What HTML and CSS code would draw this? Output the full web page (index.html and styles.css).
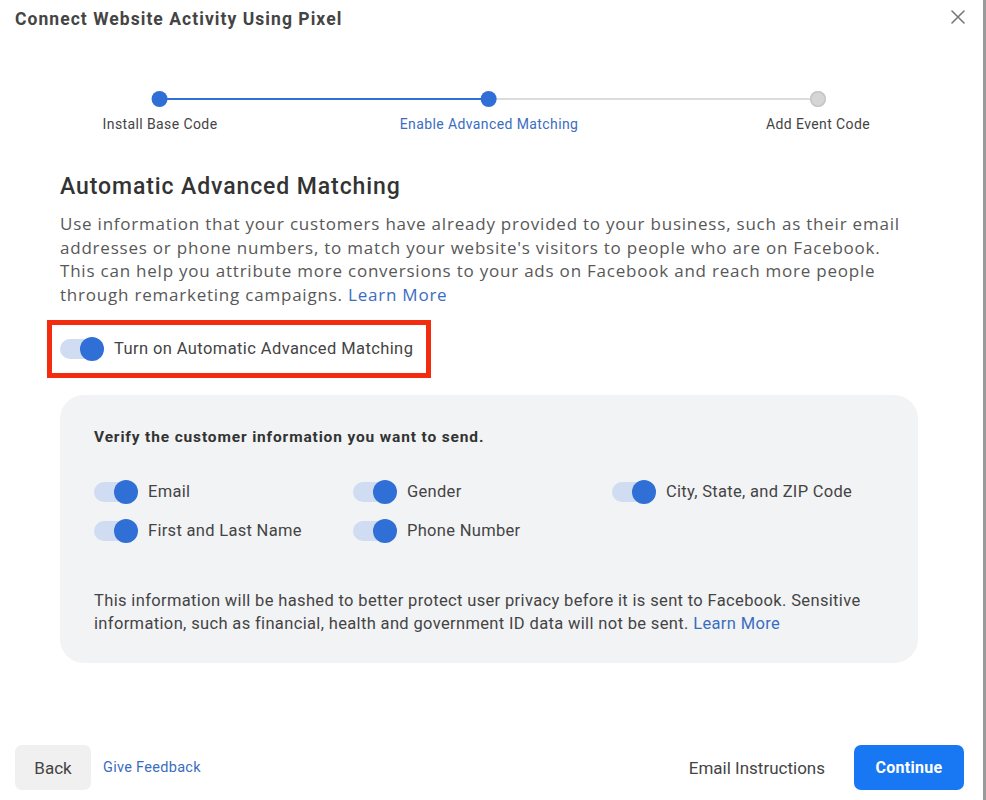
FILE: index.html
```html
<!DOCTYPE html>
<html>
<head>
<meta charset="utf-8">
<link rel="stylesheet" href="styles.css">
</head>
<body>
<div class="dialog">
  <header class="top">
    <h1 class="title">Connect Website Activity Using Pixel</h1>
    <span class="close" aria-label="Close">
      <svg width="14" height="14" viewBox="0 0 14 14"><path d="M1 1L13 13M13 1L1 13" stroke="#777" stroke-width="1.6" stroke-linecap="round"/></svg>
    </span>
  </header>

  <div class="stepper">
    <div class="track"><div class="track-done"></div></div>
    <div class="step done"><span class="dot"></span><span class="step-label">Install Base Code</span></div>
    <div class="step current"><span class="dot"></span><span class="step-label">Enable Advanced Matching</span></div>
    <div class="step todo"><span class="dot"></span><span class="step-label">Add Event Code</span></div>
  </div>

  <main class="content">
    <h2 class="heading">Automatic Advanced Matching</h2>
    <p class="intro">Use information that your customers have already provided to your business, such as their email<br>addresses or phone numbers, to match your website's visitors to people who are on Facebook.<br>This can help you attribute more conversions to your ads on Facebook and reach more people<br>through remarketing campaigns. <a class="link">Learn More</a></p>

    <div class="highlight">
      <span class="toggle"><span class="knob"></span></span>
      <span class="main-label">Turn on Automatic Advanced Matching</span>
    </div>

    <section class="panel">
      <div class="panel-title">Verify the customer information you want to send.</div>
      <div class="grid">
        <div class="opt"><span class="toggle"><span class="knob"></span></span><span>Email</span></div>
        <div class="opt"><span class="toggle"><span class="knob"></span></span><span>Gender</span></div>
        <div class="opt"><span class="toggle"><span class="knob"></span></span><span>City, State, and ZIP Code</span></div>
        <div class="opt"><span class="toggle"><span class="knob"></span></span><span>First and Last Name</span></div>
        <div class="opt"><span class="toggle"><span class="knob"></span></span><span>Phone Number</span></div>
      </div>
      <p class="note">This information will be hashed to better protect user privacy before it is sent to Facebook. Sensitive<br>information, such as financial, health and government ID data will not be sent. <a class="link">Learn More</a></p>
    </section>
  </main>

  <footer class="footer">
    <div class="left">
      <button class="btn back">Back</button>
      <a class="feedback">Give Feedback</a>
    </div>
    <div class="right">
      <a class="email">Email Instructions</a>
      <button class="btn continue">Continue</button>
    </div>
  </footer>
</div>
</body>
</html>
```
FILE: styles.css
```css
html, body {
  margin: 0;
  padding: 0;
  background: #fff;
}
body {
  font-family: Roboto, "Liberation Sans", Arial, sans-serif;
  color: #444;
}
.dialog {
  width: 983px;
  height: 800px;
  border-right: 3px solid #9a9a9a;
  display: flex;
  flex-direction: column;
  position: relative;
}
.top {
  display: flex;
  justify-content: space-between;
  align-items: flex-start;
  padding: 9px 18px 0 15px;
}
.title {
  margin: 0;
  font-size: 17.5px;
  letter-spacing: 1.05px;
  font-weight: 700;
  color: #444;
  line-height: 20px;
}
.close {
  display: block;
}
.stepper {
  position: relative;
  height: 60px;
  margin: 61px 0 0 0;
}
.track {
  position: absolute;
  left: 160px;
  top: 8px;
  width: 658px;
  height: 2px;
  background: #dcdcdc;
}
.track-done {
  width: 329px;
  height: 2px;
  background: #2f6fd6;
}
.step {
  position: absolute;
  top: 0;
  display: flex;
  flex-direction: column;
  align-items: center;
  transform: translateX(-50%);
}
.step.done { left: 160px; }
.step.current { left: 489px; }
.step.todo { left: 818px; }
.dot {
  width: 16px;
  height: 16px;
  border-radius: 50%;
  background: #2f6fd6;
  display: block;
  margin-top: 1px;
}
.todo .dot {
  background: #d5d5d5;
  box-shadow: inset 0 0 0 1.5px #c6c6c6;
}
.step-label {
  margin-top: 9px;
  font-size: 14px;
  letter-spacing: 0.4px;
  color: #444;
  white-space: nowrap;
}
.current .step-label { color: #3a6dbf; }

.content {
  padding: 0 65px 0 60px;
}
.heading {
  margin: 23px 0 0 0;
  font-size: 23px;
  letter-spacing: 0.9px;
  font-weight: 500;
  color: #333;
  line-height: 28px;
}
.intro {
  margin: 11px 0 0 0;
  font-family: "Open Sans", "Liberation Sans", sans-serif;
  font-size: 17px;
  letter-spacing: 0.78px;
  line-height: 23.7px;
  color: #585858;
  white-space: nowrap;
}
.link {
  color: #3a6dbf;
  text-decoration: none;
}
.highlight {
  display: inline-flex;
  align-items: center;
  gap: 10px;
  margin: 13px 0 0 -13px;
  padding: 12px 13px 12px 8px;
  border: 5px solid #f32b0f;
}
.main-label {
  font-size: 16.5px;
  letter-spacing: 0.4px;
  color: #444;
}
.toggle {
  position: relative;
  display: inline-block;
  width: 44px;
  height: 24px;
  flex: none;
}
.toggle::before {
  content: "";
  position: absolute;
  left: 0;
  top: 2px;
  width: 40px;
  height: 20px;
  border-radius: 10px;
  background: #cfdcf2;
}
.knob {
  position: absolute;
  right: 0;
  top: 0;
  width: 24px;
  height: 24px;
  border-radius: 50%;
  background: #2f6fd6;
}
.panel {
  margin-top: 17px;
  background: #f2f3f5;
  border-radius: 24px;
  padding: 33px 34px 27px 34px;
  height: 208px;
}
.panel-title {
  font-size: 15.5px;
  letter-spacing: 0.85px;
  font-weight: 700;
  color: #333;
  line-height: 18px;
}
.grid {
  margin-top: 34px;
  display: grid;
  grid-template-columns: 259px 259px 259px;
  row-gap: 15px;
}
.opt {
  display: flex;
  align-items: center;
  gap: 10px;
  font-size: 16.5px;
  letter-spacing: 0.3px;
  color: #444;
}
.note {
  margin: 46px 0 0 0;
  font-size: 16.5px;
  letter-spacing: 0.35px;
  line-height: 23px;
  color: #444;
  white-space: nowrap;
}
.footer {
  margin-top: auto;
  display: flex;
  justify-content: space-between;
  align-items: center;
  padding: 0 19px 10px 15px;
}
.left, .right {
  display: flex;
  align-items: center;
}
.btn {
  border: none;
  font-family: Roboto, "Liberation Sans", Arial, sans-serif;
  border-radius: 7px;
  height: 45px;
  cursor: pointer;
}
.back {
  width: 76px;
  background: #f0f0f0;
  color: #444;
  font-size: 17px;
}
.feedback {
  margin-left: 12px;
  font-size: 14.5px;
  letter-spacing: 0.3px;
  color: #3a6dbf;
}
.email {
  font-size: 17px;
  color: #444;
  margin-right: 29px;
}
.continue {
  width: 110px;
  background: #1877f2;
  color: #fff;
  font-size: 16px;
  letter-spacing: 0.3px;
  font-weight: 700;
}
```
